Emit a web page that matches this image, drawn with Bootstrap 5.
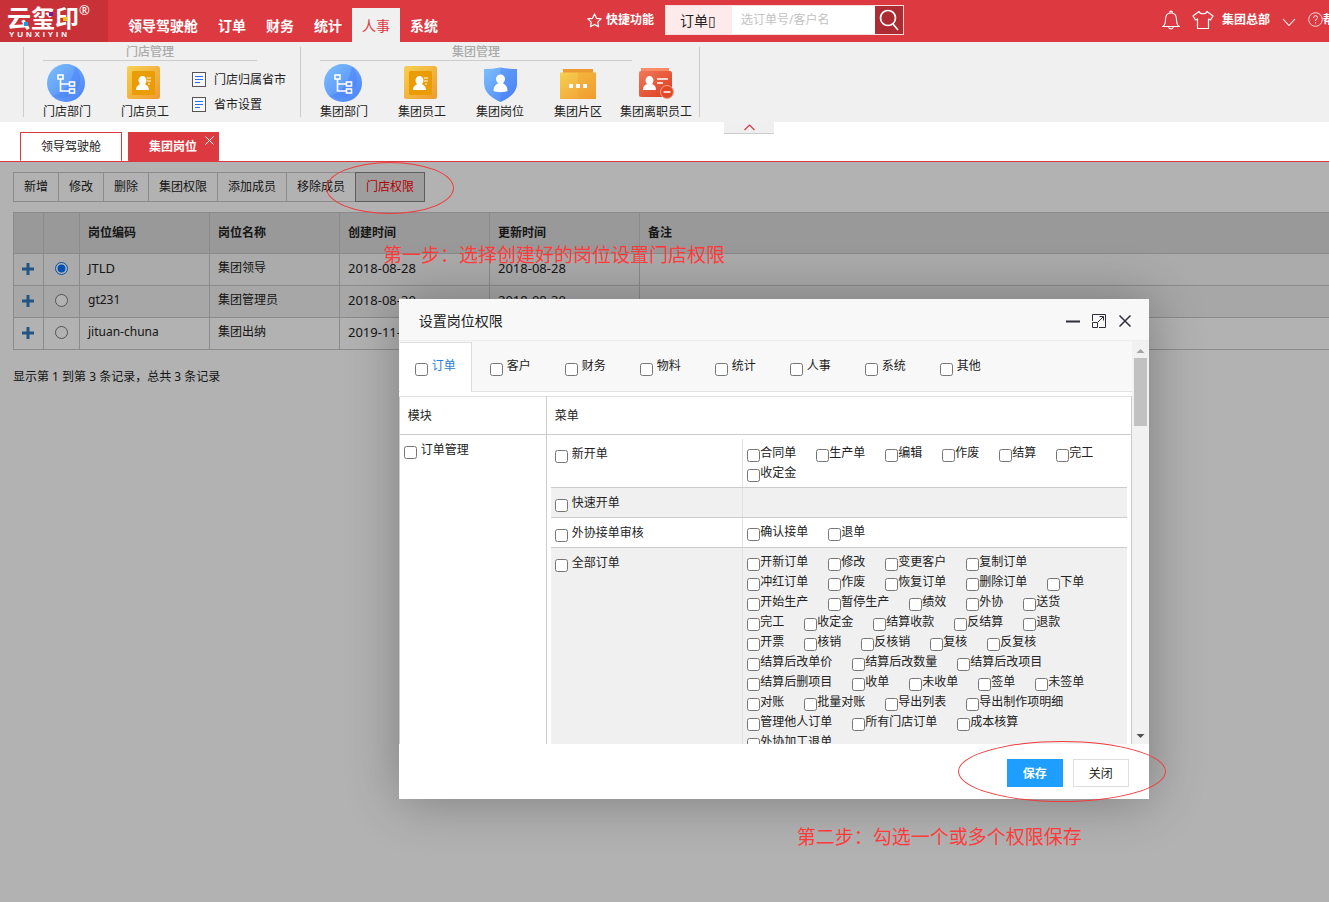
<!DOCTYPE html>
<html lang="zh-CN">
<head>
<meta charset="utf-8">
<meta name="viewport" content="width=device-width, initial-scale=1">
<title>云玺印</title>
<link href="https://cdn.jsdelivr.net/npm/bootstrap@5.3.0/dist/css/bootstrap.min.css" rel="stylesheet">
<style>
:root{--brand:#dd3940;--line:#ccc}
body{font:12px/20px "Noto Sans","Noto Sans CJK SC",sans-serif;color:#222;overflow-x:hidden}
a{color:inherit;text-decoration:none}
button,input,select{font:inherit}
input[type=checkbox],input[type=radio]{width:13px;height:13px;margin:0;flex:none}
/* top bar */
.topbar{background:var(--brand);height:42px;color:#fff;white-space:nowrap}
.brand{width:108px;height:42px;background:#c93138;padding:6px 0 0 7px}
.brand-name{font-size:24px;line-height:24px;font-weight:700;height:24px}
.brand-name sup{font-size:13px;line-height:13px;top:-2px;font-weight:400;align-self:flex-start}
.brand-latin{font:700 8px/9px "Liberation Sans",sans-serif;width:58px;margin-left:2px}
.brand-dot{position:absolute;width:4px;height:4px}
.dot-blue{left:24px;top:22px;background:#1b9be0}
.dot-purple{left:49px;top:12px;background:#7b1b8d}
.dot-yellow{left:63px;top:17px;background:#f6c600}
.mainnav{margin-left:10px;padding-top:8px;font-size:14px;font-weight:700}
.mainnav a{padding:0 10px;line-height:36px;height:34px}
.mainnav a.active{background:#f0f0f0;color:var(--brand);font-weight:400}
.quick{margin-left:139px;font-weight:700;padding-bottom:2px}
.search{margin:5px 0 0 11px;height:30px;width:239px;border:1px solid #f7dede}
.search select{appearance:none;border:0;background:#fdeaea;width:66px;padding:2px 0 0 14px;font-size:14px;color:#222}
.search input{border:0;flex:1;min-width:0;padding:0 9px;color:#333}
.search input::placeholder{color:#c2c2c2;opacity:1}
.search button{border:0;background:#ad2b33;width:28px;padding:0}
.account{flex:0 0 167px;min-width:0;font-weight:700;padding-bottom:2px}
.account>*{flex:none}
.bare{background:none;border:0;padding:0;color:inherit;display:flex}
/* ribbon */
.ribbon{background:#f0f0f0;height:80px;padding:5px 0 0 23px}
.rgroup{border-left:1px solid var(--line);height:70px;padding-left:4px}
.rgroup.last{border-right:1px solid var(--line);padding-right:4px}
.rtitle{height:14px;line-height:10px;margin-left:15px;color:#aaa;font-weight:500;text-align:center;border-bottom:1px solid var(--line)}
.w-store{width:214px}.w-corp{width:312px}
.rgroup.store{width:277px}
.ritem{width:78px;text-align:center;white-space:nowrap;padding-top:3px;display:block}
.ritem svg{display:block;margin:0 auto;width:40px;height:38px}
.rlist{padding:6px 0 0 8px}
.rlist a{height:25px;gap:7px}
.fold{position:absolute;left:54.5%;top:100%;width:50px;height:12px;background:#efefef;border:0;border-bottom:1px solid var(--line);padding:0}
/* page tabs */
.ptabs{height:40px;padding:10px 0 0 20px;border-bottom:1px solid var(--brand);gap:6px}
.ptab{border:1px solid var(--brand);border-bottom:0;padding:0 20px;line-height:28px;border-radius:1px}
.ptab.active{background:var(--brand);color:#fff;font-weight:700;position:relative;padding-right:21px}
.ptab .bare{position:absolute;right:4px;top:3px}
/* work area */
.stage{position:relative;overflow:hidden;padding:10px 0 0 13px}
.tools button{background:#fff;border:1px solid #c8c8c8;padding:0 10px;height:30px;margin-right:-1px;color:#222}
.tools button.active{background:#e3e3e3;border-color:#858585;color:#ff0007;position:relative}
.grid{width:100%;margin-top:10px;table-layout:fixed;border-collapse:collapse}
.grid th,.grid td{border:1px solid #c8c8c8;border-right:0;padding:0 8px;height:32px;line-height:28px;vertical-align:top}
.grid th{height:41px;background:#dcdcdc;line-height:40px}
.grid .num{font-size:13px}
.grid .pick{padding:8px 0 0 11px;line-height:0}
.grid .more{padding:9px 0 0 8px;line-height:0;color:#337ab7}
.row-sel td{background:#f5f5f5}.row-alt td{background:#efefef}
.summary{margin:17px 0 0}
.shade{position:absolute;inset:0;background:rgba(0,0,0,.3)}
/* dialog */
.dlg{position:absolute;left:30%;top:137px;width:750px;background:#fff;box-shadow:1px 1px 50px rgba(0,0,0,.3)}
.dlg-head{height:42px;background:#f8f8f8;border-bottom:1px solid #eee;padding:2px 17px 0 20px}
.dlg-head h2{font-size:14px;line-height:40px;margin:0;font-weight:400}
.dlg-head .bare{margin-left:10px}
.dlg-head .bare:last-child{margin-left:11px}
.dlg-body{height:403px;overflow:hidden}
.sbar{width:17px;background:#f1f1f1;flex:none;padding:2px 2px 4px}
.sthumb{width:13px;height:68px;background:#c1c1c1;margin-top:2px}
.cats{height:51px;background:#f8f8f8;border-bottom:1px solid #e2e2e2;padding:1px 0 0 1px}
.cats label{width:75px;height:50px;padding:14px 0 0 15px;gap:4px}
.cats label.active{width:72px;margin-right:3px;padding-top:13px;background:#fff;border:1px solid #ddd;border-width:1px 1px 0 0;color:#2b7fd6}
.cats input{margin-top:7px}
.lab{display:flex;align-items:center;gap:4px;height:20px}
.lab input,.perms input{margin-top:4px}
.perm-table{margin-top:4px;width:100%;table-layout:fixed;border-collapse:collapse}
.perm-table th,.perm-table td{border:1px solid var(--line);vertical-align:top;padding:0}
.perm-table th{height:38px;padding:0 8px;line-height:37px;font-weight:400;border-top-color:#e2e2e2}
.perm-table>tbody>tr>td{padding:4px}
.perm-table>tbody>tr>td:first-child{padding-top:5px}
.menus{width:100%;table-layout:fixed;border-collapse:collapse}
.menus td{border:0;border-bottom:1px solid var(--line);padding:4px!important;vertical-align:top;height:30px}
.menus td.menu-name{padding-top:5px!important}
.menus td+td{border-left:1px solid #e2e2e2}
.menus tr:nth-child(even) td{background:#f0f0f0}
.perms{display:flex;flex-wrap:wrap}
.perms label{display:flex;align-items:center;height:20px;margin-right:20px}
.dlg-foot{padding:15px 20px 12px;gap:10px}
.dlg-foot button{width:56px;height:28px;border:1px solid #dedede;background:#fff;padding:2px 0 0;color:#222}
.dlg-foot .save{background:#1e9fff;border-color:#1e9fff;color:#fff;font-weight:700}
/* guide marks */
.ring{position:absolute;border:1px solid #f23c3c;border-radius:50%;pointer-events:none}
.ring1{left:326px;top:0;width:128px;height:52px}
.ring2{left:559px;bottom:-3px;width:208px;height:61px}
.note{position:absolute;color:#ff3b3b;font-size:19px;line-height:28px;font-weight:400;white-space:nowrap;margin:0}
.note1{left:383px;top:79px}
.note2{left:398px;top:524px}
</style>
</head>
<body class="min-vh-100 d-flex flex-column">
<svg width="0" height="0" class="position-absolute" aria-hidden="true">
 <defs>
  <linearGradient id="gb" x1="0" y1="0" x2="1" y2="1"><stop offset="0" stop-color="#7cc0fb"/><stop offset="1" stop-color="#4a7ffb"/></linearGradient>
  <linearGradient id="go" x1="0" y1="0" x2="1" y2="1"><stop offset="0" stop-color="#f6d050"/><stop offset="1" stop-color="#f09a30"/></linearGradient>
  <linearGradient id="gr" x1="0" y1="0" x2="1" y2="1"><stop offset="0" stop-color="#f0785a"/><stop offset="1" stop-color="#dc3c1c"/></linearGradient>
  <symbol id="dept" viewBox="1 0 40 38"><circle cx="20" cy="19" r="19" fill="url(#gb)"/><path d="M29 2.300A19 19 0 0 1 6 32Q25 27 29 2.300Z" fill="#4379f0" opacity=".35"/><g fill="none" stroke="#fff" stroke-width="1.600"><rect x="12" y="11" width="5" height="4"/><path d="M14.500 15v12H23M14.500 20H23"/><rect x="23.500" y="18" width="5" height="4"/><rect x="23.500" y="25" width="5" height="4"/></g></symbol>
  <symbol id="staff" viewBox="2 1 40 38"><rect x="4" y="3" width="33" height="33" rx="2.500" fill="url(#go)"/><rect x="9" y="8" width="23" height="24" rx="1.500" fill="#ea9c05"/><path d="M13 27c0-4 3-5 4-6a4 4.500 0 1 1 5 0c1 1 4 2 4 6Z" fill="#fff"/><path d="M24 15h4M24 18h4M25 21h2" stroke="#fff" stroke-width="1.200"/></symbol>
  <symbol id="doc" viewBox="0 0 15 16"><rect x=".5" y=".5" width="13" height="14" fill="#f6f8fc" stroke="#555"/><path d="M3 4.500h8M3 7.500h8M3 10.500h5" stroke="#2a6df5" stroke-width="1.200"/></symbol>
 </defs>
</svg>

<header class="topbar d-flex overflow-hidden">
 <a href="#" class="brand flex-shrink-0 position-relative" aria-label="云玺印">
  <span class="brand-name d-flex">云玺印<sup>®</sup></span>
  <span class="brand-latin d-flex justify-content-between"><span>Y</span><span>U</span><span>N</span><span>X</span><span>I</span><span>Y</span><span>I</span><span>N</span></span>
  <i class="brand-dot dot-blue"></i><i class="brand-dot dot-purple"></i><i class="brand-dot dot-yellow"></i>
 </a>
 <nav class="mainnav d-flex flex-shrink-0"><a href="#">领导驾驶舱</a><a href="#">订单</a><a href="#">财务</a><a href="#">统计</a><a href="#" class="active">人事</a><a href="#">系统</a></nav>
 <a href="#" class="quick d-flex align-items-center flex-shrink-0"><svg class="me-1" width="15" height="15" viewBox="0 0 15 15" fill="none" stroke="#fff" stroke-width="1.200" stroke-linejoin="round"><path d="M7.500 1l2 4.300 4.700.6-3.500 3.200.9 4.700-4.100-2.400-4.100 2.400.9-4.700L.8 5.900l4.700-.6Z"/></svg>快捷功能</a>
 <form class="search d-flex flex-shrink-0" onsubmit="return false">
  <select aria-label="搜索类型"><option>订单▯</option></select>
  <input type="text" placeholder="选订单号/客户名" aria-label="搜索">
  <button type="submit" aria-label="搜索"><svg width="22" height="24" viewBox="0 0 22 24" fill="none" stroke="#fff" stroke-width="1.700"><circle cx="10" cy="10" r="7.500"/><path d="M15 16l5 6"/></svg></button>
 </form>
 <div class="account d-flex align-items-center ms-auto">
  <button class="bare" aria-label="通知"><svg width="18" height="20" viewBox="0 0 18 20" fill="none" stroke="#fff" stroke-width="1.100"><path d="M1 16.500h16c-2-1.500-2.500-3-2.500-7C14.500 5 12.500 3 9 3S3.500 5 3.500 9.500c0 4-.5 5.500-2.500 7ZM7.500 3c0-2.500 3-2.500 3 0M6.500 17c.5 2.500 4.500 2.500 5 0"/></svg></button>
  <button class="bare ms-2 ps-1" aria-label="皮肤"><svg width="22" height="20" viewBox="0 0 22 20" fill="none" stroke="#fff" stroke-width="1.200" stroke-linejoin="round"><path d="M7 1.500L1 6l2.500 4L5.500 9v9.500h11V9l2 1L21 6l-6-4.500c-1 3-7 3-8 0Z"/></svg></button>
  <a href="#" class="ms-2 d-flex align-items-center">集团总部<svg class="ms-2 ps-1 mt-1" width="18" height="9" viewBox="0 0 14 9" fill="none" stroke="#fff" stroke-width="1.100"><path d="M1 1l6 6.500L13 1"/></svg></a>
  <a href="#" class="ms-2 d-flex align-items-center"><svg class="ms-1" width="15" height="16" viewBox="0 0 15 16" fill="none" stroke="#fff"><circle cx="7.500" cy="7.500" r="6.800" stroke-width=".8"/><path d="M5.500 6c0-3 4-3 4-.5 0 1.500-2 1.500-2 3.500M7.500 10.300v1.200"/></svg>帮助</a>
 </div>
</header>

<section class="ribbon d-flex position-relative">
 <div class="rgroup store">
  <div class="rtitle w-store">门店管理</div>
  <div class="d-flex">
   <a href="#" class="ritem"><svg><use href="#dept"/></svg>门店部门</a>
   <a href="#" class="ritem"><svg><use href="#staff"/></svg>门店员工</a>
   <div class="rlist">
    <a href="#" class="d-flex align-items-center"><svg width="15" height="16"><use href="#doc"/></svg>门店归属省市</a>
    <a href="#" class="d-flex align-items-center"><svg width="15" height="16"><use href="#doc"/></svg>省市设置</a>
   </div>
  </div>
 </div>
 <div class="rgroup last">
  <div class="rtitle w-corp">集团管理</div>
  <div class="d-flex">
   <a href="#" class="ritem"><svg><use href="#dept"/></svg>集团部门</a>
   <a href="#" class="ritem"><svg><use href="#staff"/></svg>集团员工</a>
   <a href="#" class="ritem"><svg viewBox="0 0 40 38"><path d="M4 5Q13 5 20 3.500 27 5 37 5v14c0 10-8 15-16.500 19C12 34 4 29 4 19Z" fill="url(#gb)"/><path d="M20.500 3.600Q28 5 37 5v14c0 10-8 15-16.500 19Z" fill="#4379f0" opacity=".3"/><circle cx="20.500" cy="15" r="4.500" fill="#fff"/><path d="M13.500 27c0-5 3-7 5-8h4c2 1 5 3 5 8-3 1.500-11 1.500-14 0Z" fill="#fff"/></svg>集团岗位</a>
   <a href="#" class="ritem"><svg viewBox="0 1 40 38"><path d="M5 6h30v6H5Z" fill="#ee9a33"/><path d="M2 9.500h36V36H2Z" fill="url(#go)"/><path d="M20 9.500h18V36H20Z" fill="#f0a030" opacity=".4"/><path d="M11 21h4v4h-4Zm7 0h4v4h-4Zm7 0h4v4h-4Z" fill="#fff"/></svg>集团片区</a>
   <a href="#" class="ritem"><svg viewBox="0 0 40 38"><path d="M5 4h28v5H5Z" fill="#fb8a66"/><rect x="3" y="7" width="33" height="26" rx="2" fill="url(#gr)"/><path d="M7 26c0-4 2-5 4-6a4 4.500 0 1 1 5 0c2 1 4 2 4 6Z" fill="#fff"/><path d="M21 15h11M21 19h6" stroke="#fff" stroke-width="1.500"/><circle cx="31" cy="28" r="6.500" fill="#e0482a" stroke="#f7a58c"/><path d="M27.500 28h7" stroke="#fff" stroke-width="1.500"/></svg>集团离职员工</a>
  </div>
 </div>
 <button class="fold d-flex justify-content-center align-items-center" aria-label="收起"><svg width="11" height="7" viewBox="0 0 11 7" fill="none" stroke="#dd3940" stroke-width="1.200"><path d="M.5 6l5-5 5 5"/></svg></button>
</section>

<nav class="ptabs d-flex">
 <a href="#" class="ptab">领导驾驶舱</a>
 <div class="ptab active"><a href="#">集团岗位</a><button class="bare" aria-label="关闭标签"><svg width="9" height="9" viewBox="0 0 9 9" stroke="#fff"><path d="M.5.5l8 8M8.500.5l-8 8"/></svg></button></div>
</nav>

<main class="stage flex-fill">
 <div class="tools d-flex"><button>新增</button><button>修改</button><button>删除</button><button>集团权限</button><button>添加成员</button><button>移除成员</button><button class="active">门店权限</button></div>
 <table class="grid">
  <colgroup><col style="width:30px"><col style="width:36px"><col style="width:130px"><col style="width:130px"><col style="width:150px"><col style="width:150px"><col></colgroup>
  <thead><tr><th></th><th></th><th>岗位编码</th><th>岗位名称</th><th>创建时间</th><th>更新时间</th><th>备注</th></tr></thead>
  <tbody>
   <tr class="row-sel"><td class="more"><svg width="12" height="12"><path d="M4.500 0h3v4.500H12v3H7.500V12h-3V7.500H0v-3h4.500Z" fill="currentColor"/></svg></td><td class="pick"><input type="radio" name="post" checked aria-label="JTLD"></td><td class="num">JTLD</td><td>集团领导</td><td class="num">2018-08-28</td><td class="num">2018-08-28</td><td></td></tr>
   <tr class="row-alt"><td class="more"><svg width="12" height="12"><path d="M4.500 0h3v4.500H12v3H7.500V12h-3V7.500H0v-3h4.500Z" fill="currentColor"/></svg></td><td class="pick"><input type="radio" name="post" aria-label="gt231"></td><td>gt231</td><td>集团管理员</td><td class="num">2018-08-30</td><td class="num">2018-08-30</td><td></td></tr>
   <tr><td class="more"><svg width="12" height="12"><path d="M4.500 0h3v4.500H12v3H7.500V12h-3V7.500H0v-3h4.500Z" fill="currentColor"/></svg></td><td class="pick"><input type="radio" name="post" aria-label="jituan-chuna"></td><td>jituan-chuna</td><td>集团出纳</td><td class="num">2019-11-08</td><td class="num">2019-11-08</td><td></td></tr>
  </tbody>
 </table>
 <p class="summary">显示第 1 到第 3 条记录，总共 3 条记录</p>
 <div class="shade"></div>

 <section class="dlg" role="dialog" aria-labelledby="dlgTitle">
  <header class="dlg-head d-flex align-items-center">
   <h2 id="dlgTitle" class="me-auto">设置岗位权限</h2>
   <button class="bare" aria-label="最小化"><svg width="16" height="16"><path d="M1 8.500h14" stroke="#2e2d3c" stroke-width="2"/></svg></button>
   <button class="bare" aria-label="最大化"><svg width="16" height="16" fill="none" stroke="#2e2d3c"><path d="M1.500 8V1.500h13v13H8M1.500 9.500h5v5h-5ZM7 9l5-5M8.500 3.500h4v4"/></svg></button>
   <button class="bare" aria-label="关闭"><svg width="14" height="14" stroke="#2e2d3c" stroke-width="1.500"><path d="M1.500 1.500l11 11M12.500 1.500l-11 11"/></svg></button>
  </header>
  <div class="dlg-body d-flex">
   <div class="flex-fill">
    <div class="cats d-flex">
     <label class="active d-flex align-items-start"><input type="checkbox"><span>订单</span></label>
     <label class="d-flex align-items-start"><input type="checkbox"><span>客户</span></label>
     <label class="d-flex align-items-start"><input type="checkbox"><span>财务</span></label>
     <label class="d-flex align-items-start"><input type="checkbox"><span>物料</span></label>
     <label class="d-flex align-items-start"><input type="checkbox"><span>统计</span></label>
     <label class="d-flex align-items-start"><input type="checkbox"><span>人事</span></label>
     <label class="d-flex align-items-start"><input type="checkbox"><span>系统</span></label>
     <label class="d-flex align-items-start"><input type="checkbox"><span>其他</span></label>
    </div>
    <table class="perm-table">
     <colgroup><col style="width:147px"><col></colgroup>
     <thead><tr><th>模块</th><th>菜单</th></tr></thead>
     <tbody><tr>
      <td><label class="lab"><input type="checkbox">订单管理</label></td>
      <td><table class="menus">
       <colgroup><col style="width:192px"><col></colgroup>
       <tbody>
       <tr><td class="menu-name"><label class="lab"><input type="checkbox">新开单</label></td><td><div class="perms" data-items="合同单 生产单 编辑 作废 结算 完工 收定金"></div></td></tr>
       <tr><td class="menu-name"><label class="lab"><input type="checkbox">快速开单</label></td><td></td></tr>
       <tr><td class="menu-name"><label class="lab"><input type="checkbox">外协接单审核</label></td><td><div class="perms" data-items="确认接单 退单"></div></td></tr>
       <tr><td class="menu-name"><label class="lab"><input type="checkbox">全部订单</label></td><td><div class="perms" data-items="开新订单 修改 变更客户 复制订单 冲红订单 作废 恢复订单 删除订单 下单 开始生产 暂停生产 绩效 外协 送货 完工 收定金 结算收款 反结算 退款 开票 核销 反核销 复核 反复核 结算后改单价 结算后改数量 结算后改项目 结算后删项目 收单 未收单 签单 未签单 对账 批量对账 导出列表 导出制作项明细 管理他人订单 所有门店订单 成本核算 外协加工退单"></div></td></tr>
       </tbody>
      </table></td>
     </tr></tbody>
    </table>
   </div>
   <div class="sbar d-flex flex-column align-items-center" aria-hidden="true"><svg width="9" height="13"><path d="M.5 10l4-4 4 4Z" fill="#a3a3a3"/></svg><div class="sthumb"></div><svg class="mt-auto" width="9" height="9"><path d="M.5 3l4 4 4-4Z" fill="#505050"/></svg></div>
  </div>
  <footer class="dlg-foot d-flex justify-content-end"><button class="save">保存</button><button>关闭</button></footer>
  <div class="ring ring2"></div>
  <p class="note note2">第二步：勾选一个或多个权限保存</p>
 </section>

 <div class="ring ring1"></div>
 <p class="note note1">第一步：选择创建好的岗位设置门店权限</p>
</main>
<script src="https://cdn.jsdelivr.net/npm/bootstrap@5.3.0/dist/js/bootstrap.bundle.min.js"></script>
<script>
document.querySelectorAll('.perms').forEach(function (box) {
  box.dataset.items.split(' ').forEach(function (name) {
    var label = document.createElement('label'), input = document.createElement('input');
    input.type = 'checkbox';
    label.append(input, name);
    box.append(label);
  });
});
</script>
</body>
</html>
